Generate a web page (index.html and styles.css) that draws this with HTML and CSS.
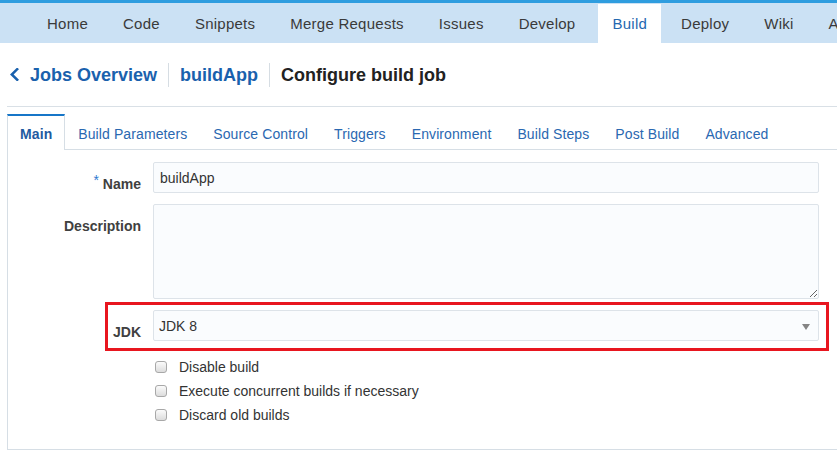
FILE: index.html
```html
<!DOCTYPE html>
<html lang="en">
<head>
<meta charset="utf-8">
<title>Configure build job</title>
<link rel="stylesheet" href="styles.css">
</head>
<body>
<nav class="topnav">
  <a class="nav-item">Home</a>
  <a class="nav-item">Code</a>
  <a class="nav-item">Snippets</a>
  <a class="nav-item">Merge Requests</a>
  <a class="nav-item">Issues</a>
  <a class="nav-item">Develop</a>
  <a class="nav-item active">Build</a>
  <a class="nav-item">Deploy</a>
  <a class="nav-item">Wiki</a>
  <a class="nav-item">Agile</a>
</nav>

<header class="page-header">
  <a class="crumb back">
    <svg class="chevron" width="9" height="13" viewBox="0 0 9 13" aria-hidden="true">
      <polyline points="7.2,1.2 1.8,6.5 7.2,11.8" fill="none" stroke="#1a61ad" stroke-width="2.5" stroke-linecap="square"/>
    </svg>
    Jobs Overview
  </a>
  <span class="sep"></span>
  <a class="crumb">buildApp</a>
  <span class="sep"></span>
  <h1 class="title">Configure build job</h1>
</header>

<section class="panel">
  <div class="tabs">
    <a class="tab active">Main</a>
    <a class="tab">Build Parameters</a>
    <a class="tab">Source Control</a>
    <a class="tab">Triggers</a>
    <a class="tab">Environment</a>
    <a class="tab">Build Steps</a>
    <a class="tab">Post Build</a>
    <a class="tab">Advanced</a>
  </div>
  <div class="panel-body">
    <form class="form">
      <div class="row">
        <label class="label"><span class="req">*</span> Name</label>
        <input class="control" type="text" value="buildApp">
      </div>
      <div class="row row-desc">
        <label class="label">Description</label>
        <textarea class="control textarea"></textarea>
      </div>
      <div class="row row-highlight">
        <label class="label">JDK</label>
        <div class="select-wrap">
          <select class="control select"><option>JDK 8</option></select>
        </div>
      </div>
      <ul class="checks">
        <li class="check"><input type="checkbox" class="cb"><span>Disable build</span></li>
        <li class="check"><input type="checkbox" class="cb"><span>Execute concurrent builds if necessary</span></li>
        <li class="check"><input type="checkbox" class="cb"><span>Discard old builds</span></li>
      </ul>
    </form>
  </div>
</section>
</body>
</html>
```

FILE: styles.css
```css
html, body {
  margin: 0;
  padding: 0;
  overflow: hidden;
  background: #ffffff;
}

body {
  font-family: "Liberation Sans", Arial, sans-serif;
  font-size: 14px;
  color: #333333;
}

a {
  text-decoration: none;
  cursor: pointer;
}

/* ---------- top navigation ---------- */
.topnav {
  display: flex;
  align-items: flex-end;
  height: 40px;
  border-top: 3px solid #2f9ddf;
  background: #cbe1f4;
  padding-left: 32px;
  white-space: nowrap;
  overflow: hidden;
}

.nav-item {
  flex: none;
  height: 39px;
  line-height: 39px;
  padding: 0 15px;
  margin-right: 5px;
  font-size: 15px;
  letter-spacing: 0.25px;
  color: #3a3a3a;
}

.nav-item.active {
  margin-left: 3px;
  padding: 0 14px;
  background: #ffffff;
  color: #2468b0;
}

/* ---------- page header / breadcrumb ---------- */
.page-header {
  display: flex;
  align-items: center;
  gap: 11px;
  height: 63px;
  margin-left: 7px;
  padding-left: 3px;
  border-bottom: 1px solid #d9e0e6;
  font-size: 18px;
  font-weight: bold;
  line-height: 24px;
}

.crumb {
  color: #1a61ad;
}

.crumb.back {
  display: flex;
  align-items: center;
}

.chevron {
  margin-right: 11px;
}

.sep {
  width: 1px;
  height: 24px;
  background: #d6dde3;
}

.title {
  margin: 0;
  font-size: 18px;
  font-weight: bold;
  color: #222222;
}

/* ---------- panel with tabs ---------- */
.panel {
  margin: 7px -20px 0 7px;
}

.tabs {
  display: flex;
  height: 35px;
  border-bottom: 1px solid #d6dee5;
  white-space: nowrap;
}

.tab {
  flex: none;
  height: 29px;
  margin-bottom: -1px;
  padding: 4px 12px 0;
  line-height: 29px;
  border: 1px solid transparent;
  border-top: 2px solid transparent;
  border-bottom: none;
  color: #2a68b1;
  letter-spacing: 0.1px;
}

.tab.active {
  height: 30px;
  background: #ffffff;
  border-color: #d6dee5;
  border-top-color: #1676c8;
  color: #1f5aa0;
  font-weight: bold;
}

.panel-body {
  border-left: 1px solid #d6dee5;
  border-bottom: 1px solid #d6dee5;
  padding: 12px 0 22px;
}

/* ---------- form ---------- */
.form {
  display: flex;
  flex-direction: column;
  margin: 0;
}

.row {
  display: grid;
  grid-template-columns: 133px 666px;
  column-gap: 12px;
  align-items: start;
}

.row-desc {
  margin-top: 11px;
}

.label {
  height: 16px;
  padding-top: 14px;
  line-height: 16px;
  text-align: right;
  font-weight: bold;
  color: #404040;
}

.req {
  color: #2d7ad0;
  font-weight: normal;
  line-height: 1px;
  vertical-align: 4px;
}

.control {
  box-sizing: border-box;
  width: 666px;
  height: 31px;
  margin: 0;
  padding: 0 6px;
  border: 1px solid #dde3e9;
  border-radius: 2px;
  background: #fafcfe;
  font-family: "Liberation Sans", Arial, sans-serif;
  font-size: 14px;
  color: #333333;
  outline: none;
}

.textarea {
  height: 95px;
  padding: 6px;
  resize: vertical;
  display: block;
}

.row-highlight {
  grid-template-columns: 33px 666px;
  width: max-content;
  margin: 3px 0 0 97px;
  padding: 5px 7px 7px 0;
  border: 3px solid #e8161f;
}

.select-wrap {
  position: relative;
}

.select {
  display: block;
  appearance: none;
  -webkit-appearance: none;
  padding-left: 5px;
}

.select-wrap::after {
  content: "";
  position: absolute;
  right: 9px;
  top: 14px;
  border-left: 4.5px solid transparent;
  border-right: 4.5px solid transparent;
  border-top: 6px solid #858585;
  pointer-events: none;
}

/* ---------- checkboxes ---------- */
.checks {
  list-style: none;
  margin: 4px 0 0 147px;
  padding: 0;
}

.check {
  display: flex;
  align-items: center;
  gap: 12px;
  height: 24px;
  line-height: 24px;
  color: #333333;
}

.cb {
  appearance: none;
  -webkit-appearance: none;
  flex: none;
  box-sizing: border-box;
  width: 12px;
  height: 12px;
  margin: 0;
  border: 1px solid #a8a8a8;
  border-radius: 3px;
  background: linear-gradient(#fbfbfb, #dcdcdc);
}
```
